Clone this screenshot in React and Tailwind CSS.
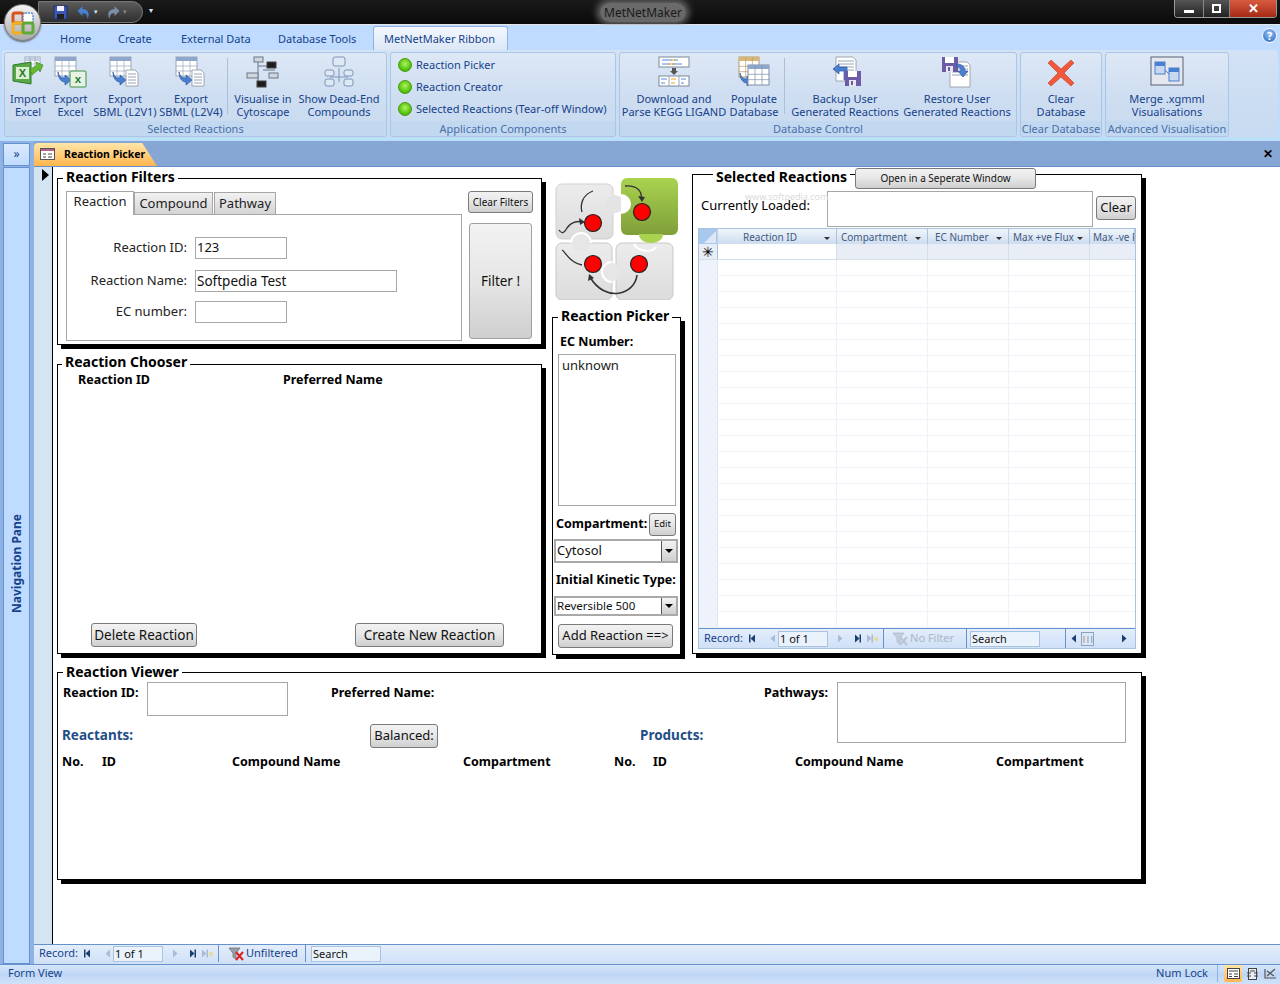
import React from "react";

const rows = Array.from({ length: 23 }, (_, i) => i);
const gridCols = ["w-[119px]", "w-[91px]", "w-[81px]", "w-[81px]", "flex-1"];

function Grid({ x, y, w = 18, h = 16, head = "#8fa6cc", line = "#9aa7bb" }) {
  const cw = w / 3;
  const rh = (h - 4) / 3;
  return (
    <g>
      <rect x={x} y={y} width={w} height={h} fill="#fff" stroke={line} strokeWidth="1" />
      <rect x={x} y={y} width={w} height="4" fill={head} />
      {[1, 2].map((i) => (
        <line key={"v" + i} x1={x + cw * i} x2={x + cw * i} y1={y} y2={y + h} stroke={line} strokeWidth="0.7" />
      ))}
      {[1, 2].map((i) => (
        <line key={"h" + i} x1={x} x2={x + w} y1={y + 4 + rh * i} y2={y + 4 + rh * i} stroke={line} strokeWidth="0.7" />
      ))}
    </g>
  );
}

function BlueArrow({ x, y, flip }) {
  return (
    <g transform={`translate(${x} ${y})${flip ? " scale(-1 1)" : ""}`}>
      <path d="M0 0 C1 5 4 6 7 6 L7 3 L13 8 L7 13 L7 10 C3 10 0 6 0 0Z" fill="#4a7fd0" stroke="#2b56a0" strokeWidth="0.7" />
    </g>
  );
}

function Doc({ x, y, w = 13, h = 16 }) {
  return (
    <g>
      <path d={`M${x} ${y} H${x + w - 3} L${x + w} ${y + 3} V${y + h} H${x}Z`} fill="#fff" stroke="#8d949e" strokeWidth="0.8" />
      {[4, 7, 10, 13].map((d) => (
        <line key={d} x1={x + 2} x2={x + w - 2} y1={y + d} y2={y + d} stroke="#7f8da3" strokeWidth="0.8" />
      ))}
    </g>
  );
}

function Floppy({ x, y, c = "#6e5ba6" }) {
  return (
    <g>
      <rect x={x} y={y} width="16" height="15" fill={c} />
      <rect x={x + 3} y={y} width="9" height="6" fill="#fff" />
      <rect x={x + 4} y={y + 9} width="7" height="6" fill="#e8e8f0" />
      <rect x={x + 6} y={y + 10} width="2" height="4" fill={c} />
    </g>
  );
}

function ExcelBadge({ x, y, w = 16 }) {
  return (
    <g>
      <rect x={x} y={y} width={w} height={w} rx="1" fill="#e6f3e4" stroke="#3f8f46" strokeWidth="1" />
      <text x={x + w / 2} y={y + w - 4} textAnchor="middle" fontSize={w * 0.72} fontWeight="700" fontFamily="Liberation Sans" fill="#1f7a2e">x</text>
    </g>
  );
}

function Icon({ name }) {
  return (
    <svg width="36" height="32" viewBox="0 0 36 32" className="shrink-0">
      {name === "import" && (
        <g>
          <Grid x={15} y={1} w={15} h={13} head="#c4cfe0" />
          <path d="M3 9 L21 6 V28 L3 25Z" fill="#5aa845" stroke="#2d7a2c" />
          <rect x="6" y="11" width="13" height="12" fill="#dcefd3" />
          <text x="12.5" y="21" textAnchor="middle" fontSize="11" fontWeight="700" fontFamily="Liberation Sans" fill="#1f7a2e">X</text>
          <path d="M20 14 L27 9 L26 6 L33 9 L30 16 L29 13 L22 19Z" fill="#66bb33" stroke="#3e8a22" strokeWidth="0.7" />
        </g>
      )}
      {name === "export" && (
        <g>
          <Grid x={2} y={1} w={21} h={19} />
          <BlueArrow x={5} y={16} />
          <ExcelBadge x={17} y={15} />
        </g>
      )}
      {name === "sbml" && (
        <g>
          <Grid x={3} y={1} w={21} h={19} />
          <BlueArrow x={6} y={16} />
          <Doc x={19} y={14} w={12} h={16} />
        </g>
      )}
      {name === "cytoscape" && (
        <g stroke="#6b7686" fill="none">
          <path d="M13 6 V26 M13 10 H26 M13 20 H8 M13 26 H16 M18 14 H30" />
          <rect x="9" y="1" width="9" height="5" fill="#cfd6e0" />
          <rect x="22" y="6" width="9" height="6" fill="#1d1d1d" stroke="#444" />
          <rect x="2" y="17" width="11" height="5" fill="#cfd6e0" />
          <rect x="24" y="17" width="9" height="5" fill="#cfd6e0" />
          <rect x="12" y="25" width="9" height="6" fill="#1d1d1d" stroke="#444" />
        </g>
      )}
      {name === "deadend" && (
        <g stroke="#7c93b8" fill="#dfe9f6">
          <path d="M18 12 V26 M9 21 H27" fill="none" />
          <rect x="12" y="1" width="12" height="9" rx="2" />
          <rect x="4" y="14" width="9" height="6" rx="2" />
          <rect x="23" y="14" width="9" height="6" rx="2" />
          <rect x="4" y="23" width="9" height="7" rx="2" />
          <rect x="23" y="23" width="9" height="7" rx="2" />
        </g>
      )}
      {name === "kegg" && (
        <g>
          <rect x="3" y="1" width="30" height="10" fill="#fff" stroke="#7d8798" />
          <path d="M6 4 H16 M18 4 H22 M6 8 H14 M16 8 H26" stroke="#4d8be0" strokeWidth="1" />
          <path d="M15 4 H19 M12 8 H19" stroke="#f0a020" strokeWidth="1" />
          <path d="M16 12 H20 V15 H22 L18 19 L14 15 H16Z" fill="#555" />
          <rect x="3" y="20" width="30" height="10" fill="#fff" stroke="#7d8798" />
          <path d="M13 20 V30 M23 20 V30" stroke="#9aa7bb" />
          <path d="M5 23 H11 M5 27 H9 M25 23 H30 M25 27 H28" stroke="#4d8be0" />
          <path d="M15 23 H20 M15 27 H19" stroke="#f0a020" />
        </g>
      )}
      {name === "populate" && (
        <g>
          <Grid x={3} y={1} w={20} h={20} head="#d8b878" line="#b89c6c" />
          <BlueArrow x={4} y={17} />
          <Grid x={12} y={9} w={21} h={20} head="#8fa6cc" line="#7d8da8" />
        </g>
      )}
      {name === "backup" && (
        <g>
          <Doc x={9} y={1} w={20} h={24} />
          <path d="M20 11 H12 L12 8 L6 13 L12 18 V15 H17 V24 H20Z" fill="#4a7fd0" stroke="#2b56a0" strokeWidth="0.7" />
          <Floppy x={18} y={15} />
        </g>
      )}
      {name === "restore" && (
        <g>
          <Doc x={11} y={6} w={20} h={25} />
          <Floppy x={3} y={1} />
          <path d="M18 8 C24 8 26 12 26 15 H29 L24 21 L19 15 H22 C22 12 20 11 18 11Z" fill="#4a7fd0" stroke="#2b56a0" strokeWidth="0.7" />
        </g>
      )}
      {name === "clear" && (
        <g>
          <path d="M8 4 L18 13 L28 4 L31 7 L21 17 L31 27 L28 30 L18 21 L8 30 L5 27 L15 17 L5 7Z" fill="#f2583c" stroke="#c53a22" strokeWidth="0.6" />
        </g>
      )}
      {name === "merge" && (
        <g>
          <rect x="2" y="1" width="32" height="28" fill="#e4e8ee" stroke="#586275" />
          <rect x="6" y="6" width="10" height="12" fill="#c8d8f0" stroke="#4a7fd0" />
          <rect x="6" y="6" width="10" height="4" fill="#4a7fd0" />
          <rect x="20" y="12" width="10" height="13" fill="#c8d8f0" stroke="#4a7fd0" />
          <rect x="20" y="12" width="10" height="4" fill="#4a7fd0" />
          <path d="M16 14 L20 18" stroke="#4a7fd0" />
        </g>
      )}
    </svg>
  );
}

function RibbonBtn({ icon, width, lines }) {
  return (
    <div className={`${width} flex flex-col items-center shrink-0 pt-[3px]`}>
      <Icon name={icon} />
      <div className="mt-[4px] text-center text-[11px] leading-[13px] text-[#15428b] whitespace-nowrap">
        {lines.map((l) => (
          <div key={l}>{l}</div>
        ))}
      </div>
    </div>
  );
}

function RibbonGroup({ label, width, children }) {
  return (
    <div className={`${width} shrink-0 h-[85px] flex flex-col rounded-[3px] border border-[#a9c6e8] bg-gradient-to-b from-[#dde8f6] via-[#cfdef1] to-[#c8daf0] overflow-hidden`}>
      <div className="flex-1 flex px-[2px]">{children}</div>
      <div className="h-[15px] bg-[#c1d8f0] text-center text-[11px] leading-[15px] text-[#4a6fa8] whitespace-nowrap">{label}</div>
    </div>
  );
}

function Sep() {
  return <div className="w-px h-[56px] mt-[5px] bg-[#a9bfdb] shrink-0" />;
}

function GreenDot() {
  return <span className="w-[14px] h-[14px] rounded-full shrink-0 border border-[#4b9a12] bg-[radial-gradient(circle_at_50%_40%,#b4f060,#55c80e_60%,#2f8f08)]" />;
}

function OldBtn({ className = "", children }) {
  return (
    <button className={`rounded-[3px] border border-[#7a7a7a] bg-gradient-to-b from-[#f2f2f2] via-[#e6e6e6] to-[#cfcfcf] text-[#111] whitespace-nowrap flex items-center justify-center ${className}`}>
      {children}
    </button>
  );
}

function Panel({ title, titleClass = "", className = "", children }) {
  return (
    <div className={`relative border border-black bg-white shadow-[4px_4px_0_#000] ${className}`}>
      <span className={`absolute bg-white px-[3px] text-[14px] leading-[17px] font-bold text-black whitespace-nowrap ${titleClass}`}>{title}</span>
      {children}
    </div>
  );
}

function Field({ className = "", children }) {
  return <div className={`border border-[#a6a6a6] bg-white text-[#111] px-[1px] flex items-center ${className}`}>{children}</div>;
}

function Combo({ className = "", textClass = "text-[13px]", children }) {
  return (
    <div className={`border-2 border-[#a9a9a9] bg-white flex items-center justify-between ${className}`}>
      <span className={`pl-px pb-px text-[#111] ${textClass}`}>{children}</span>
      <span className="w-[15px] h-full border-l border-[#555] bg-gradient-to-b from-[#f4f4f4] to-[#cfcfcf] flex items-center justify-center">
        <span className="border-x-[4px] border-t-[4px] border-x-transparent border-t-black" />
      </span>
    </div>
  );
}

function Logo() {
  return (
    <svg width="125" height="123" viewBox="0 0 125 123" className="shrink-0">
      <defs>
        <linearGradient id="grn" x1="0" y1="0" x2="0" y2="1">
          <stop offset="0" stopColor="#a9d24f" />
          <stop offset="1" stopColor="#7f9f3a" />
        </linearGradient>
        <linearGradient id="gry" x1="0" y1="0" x2="0" y2="1">
          <stop offset="0" stopColor="#ececec" />
          <stop offset="1" stopColor="#dcdcdc" />
        </linearGradient>
      </defs>
      <rect x="1" y="7" width="57" height="55" rx="6" fill="url(#gry)" stroke="#cfcfcf" />
      <circle cx="60" cy="27" r="9" fill="#e4e4e4" />
      <rect x="1" y="66" width="56" height="57" rx="6" fill="url(#gry)" stroke="#c8c8c8" />
      <rect x="61" y="66" width="57" height="57" rx="6" fill="url(#gry)" stroke="#c8c8c8" />
      <circle cx="26" cy="66" r="9" fill="#e6e6e6" />
      <path d="M16 66 A10 10 0 0 1 36 66" fill="none" stroke="#fff" strokeWidth="2" />
      <circle cx="57" cy="95" r="9" fill="#e6e6e6" />
      <path d="M57 85 A10 10 0 0 0 57 105" fill="none" stroke="#fff" strokeWidth="2" />
      <rect x="66" y="1" width="57" height="57" rx="6" fill="url(#grn)" />
      <path d="M66 17 A10 10 0 0 1 66 37Z" fill="#fff" />
      <path d="M84 57 h24 c0 12 -24 12 -24 0Z" fill="#a9d24f" />
      <path d="M79 67 c4 8 18 9 22 3" fill="none" stroke="#fff" strokeWidth="2" />
      <g fill="none" stroke="#333" strokeWidth="1.3">
        <path d="M38 14 C27 18 25 28 27 35" />
        <path d="M4 53 C7 58 10 55 12 51 C17 44 24 44 27 45" />
        <path d="M70 9 C80 8 88 13 86 22" />
        <path d="M7 73 C10 74 14 86 27 88" />
        <path d="M82 98 C80 118 50 126 35 100" strokeWidth="1.6" />
      </g>
      <g fill="#333">
        <path d="M30 45 L24 41 L25 48Z" />
        <path d="M87 25 L83 19 L90 20Z" />
        <path d="M34 97 L33 104 L39 101Z" />
      </g>
      <g fill="#f00" stroke="#222" strokeWidth="1.2">
        <circle cx="38" cy="46" r="8.5" />
        <circle cx="87" cy="35" r="8.5" />
        <circle cx="38" cy="87" r="8.5" />
        <circle cx="84" cy="87" r="8.5" />
      </g>
    </svg>
  );
}

function NavTri({ dir = "r", on, bar }) {
  const c = on ? "#1c3f73" : "#a9bcd6";
  return (
    <svg width="9" height="9" viewBox="0 0 9 9" className="shrink-0">
      {dir === "r" ? <path d="M2 0.5 L6.5 4.5 L2 8.5Z" fill={c} /> : <path d="M7 0.5 L2.5 4.5 L7 8.5Z" fill={c} />}
      {bar && <rect x={dir === "r" ? 6.5 : 1} y="0.5" width="1.5" height="8" fill={c} />}
    </svg>
  );
}

function RecordCore() {
  return (
    <div className="flex items-center h-full pl-[5px] pr-[5px] border-r border-[#6591cd] shrink-0">
      <span className="text-[11px] text-[#15428b] mr-[5px]">Record:</span>
      <NavTri dir="l" on bar />
      <span className="w-[11px]" />
      <NavTri dir="l" />
      <span className="ml-px w-[50px] h-[16px] border border-[#a9c2e0] bg-[#eaf2fc] text-[11px] leading-[14px] pl-px text-[#111]">1 of 1</span>
      <span className="w-[8px]" />
      <NavTri />
      <span className="w-[8px]" />
      <NavTri on bar />
      <span className="w-[3px]" />
      <NavTri bar />
      <span className="w-[4px] h-[4px] bg-[#e6dca8]" />
    </div>
  );
}

function FilterGlyph({ on }) {
  return (
    <svg width="16" height="14" viewBox="0 0 16 14" className="shrink-0">
      <path d="M1 1 H12 L8 6 V12 L5 10 V6Z" fill={on ? "#9aa0aa" : "#c3cedd"} stroke={on ? "#666" : "#a9b6c8"} strokeWidth="0.7" />
      <path d="M8 5 L15 13 M15 5 L8 13" stroke={on ? "#e0201c" : "#b9c5d6"} strokeWidth="2" />
    </svg>
  );
}

export default function App() {
  return (
    <div className="w-[1280px] h-[984px] overflow-hidden flex flex-col bg-white font-['Noto_Sans',sans-serif]">
      {/* Title bar */}
      <div className="relative h-[25px] shrink-0 bg-gradient-to-b from-[#1a1a1a] to-[#0a0a0a] border-b border-[#e5e5e5] flex items-start">
        <div className="ml-[38px] mt-px h-[22px] w-[105px] rounded-r-full border border-[#777] bg-gradient-to-b from-[#5c5c5c] to-[#2f2f2f] flex items-center pl-[14px] gap-[2px]">
          <svg width="15" height="15" viewBox="0 0 15 15">
            <rect x="1" y="1" width="13" height="13" fill="#3c58b0" stroke="#1c2f70" />
            <rect x="4" y="1" width="7" height="5" fill="#eef" />
            <rect x="4" y="9" width="7" height="5" fill="#222" />
          </svg>
          <svg width="16" height="15" viewBox="0 0 15 15" className="ml-[6px]">
            <path d="M1 6 L6 1 V4 C11 4 14 8 11 14 C11 10 9 8 6 8 V11Z" fill="#4a7fd0" />
          </svg>
          <span className="text-[7px] text-[#cfe0f5]">▾</span>
          <svg width="16" height="15" viewBox="0 0 15 15" className="ml-[5px]">
            <path d="M14 6 L9 1 V4 C4 4 1 8 4 14 C4 10 6 8 9 8 V11Z" fill="#7b8ea8" />
          </svg>
          <span className="text-[7px] text-[#888]">▾</span>
        </div>
        <span className="ml-[6px] mt-[5px] text-[8px] leading-[10px] text-[#d8e4f5]">▾</span>
        <div className="absolute left-[600px] top-[3px] px-[4px] rounded-full bg-[#8f8f8f]/70 shadow-[0_0_7px_3px_rgba(143,143,143,0.7)] text-[12px] leading-[19px] text-[#1a1a1a]">MetNetMaker</div>
        <div className="ml-auto mr-[3px] h-[18px] flex border border-t-0 border-[#999] rounded-b-[4px] overflow-hidden">
          <div className="w-[29px] bg-gradient-to-b from-[#555] to-[#222] border-r border-[#888] flex items-end justify-center pb-[4px]">
            <span className="w-[10px] h-[3px] bg-white" />
          </div>
          <div className="w-[26px] bg-gradient-to-b from-[#555] to-[#222] border-r border-[#888] flex items-center justify-center">
            <span className="w-[9px] h-[9px] border-2 border-white" />
          </div>
          <div className="w-[46px] bg-gradient-to-b from-[#d85b3f] to-[#a52a14] flex items-center justify-center text-white text-[13px] font-bold leading-none">✕</div>
        </div>
      </div>

      {/* Ribbon tabs */}
      <div className="relative h-[25px] shrink-0 bg-[#bfdbff] flex items-end text-[11px] text-[#15428b]">
        <div className="w-[60px]" />
        <div className="w-[58px] leading-[22px]">Home</div>
        <div className="w-[63px] leading-[22px]">Create</div>
        <div className="w-[97px] leading-[22px]">External Data</div>
        <div className="w-[95px] leading-[22px]">Database Tools</div>
        <div className="w-[135px] h-[24px] rounded-t-[3px] border border-b-0 border-[#8db2e3] bg-gradient-to-b from-[#f4f8fe] to-[#dbe7f6] pl-[10px] leading-[24px]">MetNetMaker Ribbon</div>
        <span className="absolute right-[3px] top-[3px] w-[15px] h-[15px] rounded-full bg-[radial-gradient(circle_at_50%_35%,#9cc6f5,#1f5fbf)] border border-white text-white text-[11px] font-bold leading-[13px] text-center">?</span>
        {/* Office orb */}
        <div className="absolute left-[4px] top-[-21px] w-[37px] h-[37px] rounded-full bg-gradient-to-b from-[#f4f4f4] to-[#a9a9a9] border border-[#777] flex items-center justify-center shadow-[0_1px_2px_#555]">
          <svg width="24" height="24" viewBox="0 0 24 24">
            <rect x="2" y="2" width="10" height="10" rx="2" fill="none" stroke="#d9531e" strokeWidth="3" />
            <rect x="12" y="2" width="10" height="10" rx="2" fill="#fff" stroke="#5a86c9" strokeWidth="1.5" strokeDasharray="2 1" />
            <rect x="2" y="12" width="10" height="10" rx="2" fill="none" stroke="#f0b021" strokeWidth="3" />
            <rect x="12" y="12" width="10" height="10" rx="2" fill="none" stroke="#5fa83a" strokeWidth="3" />
          </svg>
        </div>
      </div>

      {/* Ribbon */}
      <div className="h-[91px] shrink-0 bg-[#bfdbff] px-[2px]">
        <div className="h-[90px] rounded-[3px] border-b-2 border-b-[#b5e4f8] bg-gradient-to-b from-[#d3e2f4] to-[#c6daf1] flex gap-[3px] pl-[2px] pt-[2px]">
          <RibbonGroup label="Selected Reactions" width="w-[383px]">
            <RibbonBtn icon="import" width="w-[42px]" lines={["Import", "Excel"]} />
            <RibbonBtn icon="export" width="w-[43px]" lines={["Export", "Excel"]} />
            <RibbonBtn icon="sbml" width="w-[66px]" lines={["Export", "SBML (L2V1)"]} />
            <RibbonBtn icon="sbml" width="w-[66px]" lines={["Export", "SBML (L2V4)"]} />
            <div className="w-[6px] shrink-0 flex justify-center"><Sep /></div>
            <RibbonBtn icon="cytoscape" width="w-[66px]" lines={["Visualise in", "Cytoscape"]} />
            <RibbonBtn icon="deadend" width="w-[86px]" lines={["Show Dead-End", "Compounds"]} />
          </RibbonGroup>
          <RibbonGroup label="Application Components" width="w-[226px]">
            <div className="flex flex-col pl-[5px] pt-[5px] gap-[8px] text-[11px] leading-[14px] text-[#15428b] whitespace-nowrap">
              {["Reaction Picker", "Reaction Creator", "Selected Reactions (Tear-off Window)"].map((t) => (
                <div key={t} className="flex items-center gap-[4px]">
                  <GreenDot />
                  {t}
                </div>
              ))}
            </div>
          </RibbonGroup>
          <RibbonGroup label="Database Control" width="w-[398px]">
            <RibbonBtn icon="kegg" width="w-[104px]" lines={["Download and", "Parse KEGG LIGAND"]} />
            <RibbonBtn icon="populate" width="w-[52px] ml-[2px]" lines={["Populate", "Database"]} />
            <div className="w-[9px] shrink-0 flex justify-center"><Sep /></div>
            <RibbonBtn icon="backup" width="w-[112px]" lines={["Backup User", "Generated Reactions"]} />
            <RibbonBtn icon="restore" width="w-[112px]" lines={["Restore User", "Generated Reactions"]} />
          </RibbonGroup>
          <RibbonGroup label="Clear Database" width="w-[82px]">
            <div className="flex-1 flex justify-center">
              <RibbonBtn icon="clear" width="w-[70px]" lines={["Clear", "Database"]} />
            </div>
          </RibbonGroup>
          <RibbonGroup label="Advanced Visualisation" width="w-[124px]">
            <div className="flex-1 flex justify-center">
              <RibbonBtn icon="merge" width="w-[100px]" lines={["Merge .xgmml", "Visualisations"]} />
            </div>
          </RibbonGroup>
        </div>
      </div>

      {/* Main */}
      <div className="flex-1 min-h-0 flex bg-[#8db2e3]">
        {/* Navigation pane */}
        <div className="w-[34px] shrink-0 pl-[3px] pr-[4px] pt-[2px] flex flex-col gap-px">
          <div className="h-[23px] border border-[#6591cd] bg-gradient-to-b from-[#dbeafd] to-[#bfdbff] text-center text-[12px] leading-[20px] text-[#15428b]">»</div>
          <div className="flex-1 border border-[#6591cd] bg-[#bfdbff] flex items-center justify-center">
            <span className="[writing-mode:vertical-rl] rotate-180 text-[12px] font-bold text-[#15428b] mt-[-4px]">Navigation Pane</span>
          </div>
        </div>

        <div className="flex-1 min-w-0 flex flex-col">
          {/* Document tab strip */}
          <div className="h-[26px] shrink-0 bg-[#86a6d4] flex items-end justify-between border-b border-[#6591cd]">
            <div className="w-[123px] h-[23px] rounded-tl-[4px] bg-gradient-to-b from-[#ffe6a8] to-[#ffb54a] flex items-center pl-[6px] pb-px gap-[9px] [clip-path:polygon(0_0,88%_0,100%_100%,0_100%)]">
              <svg width="15" height="12" viewBox="0 0 15 12" className="shrink-0">
                <rect x="0.5" y="0.5" width="14" height="11" fill="#fff" stroke="#555" />
                <rect x="1" y="1" width="13" height="2" fill="#b0628c" />
                <path d="M3 6 H6 M3 9 H6 M8 6 H12 M8 9 H12" stroke="#444" />
              </svg>
              <span className="text-[10.5px] font-bold text-black leading-none whitespace-nowrap">Reaction Picker</span>
            </div>
            <span className="mr-[7px] mb-[5px] text-[12px] leading-[14px] font-bold text-black">✕</span>
          </div>

          {/* Form */}
          <div className="flex-1 min-h-0 flex bg-white">
            <div className="w-[19px] shrink-0 bg-[#d5e4f2] border-r border-black pt-[2px] pl-[8px]">
              <span className="block w-0 h-0 border-y-[6px] border-l-[7px] border-y-transparent border-l-black" />
            </div>
            <div className="flex-1 min-w-0 relative pl-[4px] pt-[7px]">
              <div className="flex items-start">
                {/* Left column */}
                <div className="w-[485px] shrink-0 pt-[4px] flex flex-col gap-[19px]">
                  <Panel title="Reaction Filters" titleClass="left-[5px] top-[-11px]" className="h-[167px] pl-[8px] pt-[11px] flex">
                    <div className="w-[396px] shrink-0 flex flex-col">
                      <div className="flex items-end h-[24px] text-[13px] text-[#222]">
                        <div className="w-[68px] h-[24px] bg-white border border-b-0 border-[#a6a6a6] text-center leading-[18px] relative z-10 mb-[-1px]">Reaction</div>
                        <div className="w-[79px] h-[22px] border border-b-0 border-[#a6a6a6] bg-gradient-to-b from-[#f2f2f2] to-[#d4d4d4] text-center leading-[20px]">Compound</div>
                        <div className="w-[62px] ml-px h-[22px] border border-b-0 border-[#a6a6a6] bg-gradient-to-b from-[#f2f2f2] to-[#d4d4d4] text-center leading-[20px]">Pathway</div>
                      </div>
                      <div className="h-[127px] border border-[#a6a6a6] pt-[22px] flex flex-col text-[13px] text-[#222]">
                        <div className="flex items-center h-[22px]">
                          <span className="w-[120px] text-right">Reaction ID:</span>
                          <Field className="ml-[8px] w-[92px] h-[22px] text-[13px]">123</Field>
                        </div>
                        <div className="flex items-center h-[22px] mt-[11px]">
                          <span className="w-[120px] text-right">Reaction Name:</span>
                          <Field className="ml-[8px] w-[202px] h-[22px] text-[13.5px]">Softpedia Test</Field>
                        </div>
                        <div className="flex items-center h-[22px] mt-[9px]">
                          <span className="w-[120px] text-right">EC number:</span>
                          <Field className="ml-[8px] w-[92px] h-[22px]" />
                        </div>
                      </div>
                    </div>
                    <div className="ml-[6px] flex flex-col">
                      <OldBtn className="w-[65px] h-[22px] mt-px text-[10px]">Clear Filters</OldBtn>
                      <OldBtn className="w-[63px] h-[116px] mt-[10px] ml-px text-[13.5px] !border-[#a0a0a0]">Filter !</OldBtn>
                    </div>
                  </Panel>
                  <Panel title="Reaction Chooser" titleClass="left-[4px] top-[-12px]" className="h-[290px] flex flex-col">
                    <div className="flex text-[12.5px] font-bold text-black mt-[6px] leading-[18px]">
                      <span className="ml-[20px] w-[205px]">Reaction ID</span>
                      <span>Preferred Name</span>
                    </div>
                    <div className="mt-auto mb-[6px] flex text-[13.5px]">
                      <OldBtn className="ml-[33px] w-[106px] h-[24px]">Delete Reaction</OldBtn>
                      <OldBtn className="ml-[158px] w-[149px] h-[24px]">Create New Reaction</OldBtn>
                    </div>
                  </Panel>
                </div>

                {/* Middle column */}
                <div className="ml-[10px] w-[129px] shrink-0 pt-[3px] flex flex-col">
                  <div className="pl-[3px]"><Logo /></div>
                  <Panel title="Reaction Picker" titleClass="left-[5px] top-[-11px]" className="mt-[17px] h-[338px] pl-[5px] pr-[4px] pt-[15px] flex flex-col">
                    <div className="text-[12.5px] font-bold text-black leading-[17px] pl-[2px]">EC Number:</div>
                    <div className="mt-[4px] h-[152px] border border-[#a6a6a6] px-[3px] text-[13px] leading-[20px] text-[#222]">unknown</div>
                    <div className="mt-[7px] h-[23px] flex items-center justify-between text-[12.5px] font-bold text-black -ml-[2px]">
                      <span>Compartment:</span>
                      <OldBtn className="w-[27px] h-[23px] text-[9.5px] font-normal">Edit</OldBtn>
                    </div>
                    <Combo className="mt-[3px] h-[24px] -ml-[4px] -mr-[2px]">Cytosol</Combo>
                    <div className="mt-[7px] text-[12.5px] font-bold text-black leading-[20px] -ml-[2px] whitespace-nowrap">Initial Kinetic Type:</div>
                    <Combo className="mt-[6px] h-[20px] -ml-[4px] -mr-[2px]" textClass="text-[11.5px]">Reversible 500</Combo>
                    <OldBtn className="mt-[8px] h-[24px] w-[115px] text-[13px]">Add Reaction ==&gt;</OldBtn>
                  </Panel>
                </div>

                {/* Selected reactions */}
                <Panel title="Selected Reactions" titleClass="left-[20px] top-[-7px]" className="ml-[11px] w-[450px] h-[480px] px-[5px] flex flex-col">
                  <OldBtn className="absolute left-[162px] top-[-7px] w-[181px] h-[21px] text-[10px]">Open in a Seperate Window</OldBtn>
                  <div className="h-[37px] mt-[16px] flex items-start text-[13px] text-black">
                    <span className="ml-[3px] w-[126px] mt-[4px] leading-[20px]">Currently Loaded:</span>
                    <div className="w-[266px] h-[36px] border border-[#a6a6a6]" />
                    <OldBtn className="ml-[3px] mt-[5px] w-[40px] h-[24px] text-[13px]">Clear</OldBtn>
                  </div>
                  <span className="absolute left-[52px] top-[16px] text-[9px] leading-[12px] text-[#dcdcdc]">www.softpedia.com</span>

                  <div className="h-[421px] border border-[#a9c2e0] flex flex-col">
                    <div className="h-[15px] shrink-0 flex bg-gradient-to-b from-[#f0f5fb] to-[#cddcef]">
                      <div className="w-[19px] shrink-0 bg-[#a9c8ee] border-r border-[#c3d3e6] relative">
                        <span className="absolute right-px bottom-px w-0 h-0 border-l-[12px] border-b-[12px] border-l-transparent border-b-[#dce8f6]" />
                      </div>
                      {[
                        ["Reaction ID", "pl-[25px]"],
                        ["Compartment", "pl-[4px]"],
                        ["EC Number", "pl-[7px]"],
                        ["Max +ve Flux", "pl-[4px]"],
                        ["Max -ve Flux", "pl-[3px]"],
                      ].map(([t, pad], i) => (
                        <div key={t} className={`${gridCols[i]} ${i < 4 ? "shrink-0" : "min-w-0"} relative flex items-center overflow-hidden border-r border-[#a9c2e0] text-[10px] leading-none text-[#3f5a80] whitespace-nowrap ${pad}`}>
                          {t}
                          {i < 4 && <span className="absolute right-[6px] top-[8px] w-0 h-0 border-x-[3px] border-t-[3px] border-x-transparent border-t-[#333]" />}
                        </div>
                      ))}
                    </div>
                    <div className="h-[16px] shrink-0 flex bg-[#e8edf6] border-b border-[#d5deeb]">
                      <div className="w-[19px] shrink-0 border-r border-[#a9c2e0] text-center text-[14px] leading-[16px] text-black">✳</div>
                      <div className="w-[119px] shrink-0 bg-white border-r border-[#d5deeb]" />
                      <div className="w-[91px] shrink-0 border-r border-[#d5deeb]" />
                      <div className="w-[81px] shrink-0 border-r border-[#d5deeb]" />
                      <div className="w-[81px] shrink-0 border-r border-[#d5deeb]" />
                      <div className="flex-1" />
                    </div>
                    <div className="flex-1 min-h-0 overflow-hidden">
                      {rows.map((r) => (
                        <div key={r} className="h-[16px] flex border-b border-[#eef2f8]">
                          <div className="w-[19px] shrink-0 bg-[#eef2fb] border-r border-[#dfe6f1]" />
                          {gridCols.map((c, i) => (
                            <div key={i} className={`${c} ${i < 4 ? "shrink-0 border-r border-[#eef2f8]" : ""}`} />
                          ))}
                        </div>
                      ))}
                    </div>
                    <div className="h-[20px] shrink-0 flex items-center border-t border-[#6591cd] bg-gradient-to-b from-[#e4eefb] to-[#cfe0f7]">
                      <RecordCore />
                      <div className="flex items-center gap-[2px] h-full w-[83px] pl-[8px] border-r border-[#6591cd] text-[11px] text-[#a9b6c8] whitespace-nowrap">
                        <FilterGlyph />
                        No Filter
                      </div>
                      <div className="flex items-center h-full w-[99px] pl-[3px] border-r border-[#6591cd]">
                        <span className="w-[70px] h-[16px] border border-[#a9c2e0] bg-[#eaf2fc] text-[11px] leading-[14px] pl-px text-[#111]">Search</span>
                      </div>
                      <div className="flex-1 flex items-center pl-[3px] pr-[6px]">
                        <NavTri dir="l" on />
                        <span className="ml-[3px] w-[13px] h-[14px] border border-[#8aa2c4] bg-[#dce8f6] text-[7px] leading-[12px] text-center text-[#555]">|||</span>
                        <span className="ml-auto"><NavTri on /></span>
                      </div>
                    </div>
                  </div>
                </Panel>
              </div>

              {/* Reaction viewer */}
              <Panel title="Reaction Viewer" titleClass="left-[5px] top-[-10px]" className="mt-[17px] w-[1085px] h-[208px] flex flex-col pt-[9px] text-[12.5px] text-black">
                <div className="flex items-start h-[62px]">
                  <span className="ml-[5px] w-[84px] mt-[2px] font-bold leading-[18px]">Reaction ID:</span>
                  <div className="w-[141px] h-[34px] border border-[#a6a6a6]" />
                  <span className="ml-[43px] w-[433px] mt-[2px] font-bold leading-[18px]">Preferred Name:</span>
                  <span className="w-[73px] mt-[2px] font-bold leading-[18px]">Pathways:</span>
                  <div className="w-[289px] h-[61px] border border-[#a6a6a6]" />
                </div>
                <div className="flex items-center h-[24px] mt-[-20px]">
                  <span className="ml-[4px] w-[308px] pb-[2px] text-[13.5px] font-bold text-[#1f4e87]">Reactants:</span>
                  <OldBtn className="w-[68px] h-[24px] text-[13px]">Balanced:</OldBtn>
                  <span className="ml-[202px] pb-[2px] text-[13.5px] font-bold text-[#1f4e87]">Products:</span>
                </div>
                <div className="flex mt-[4px] font-bold leading-[20px] whitespace-nowrap">
                  <span className="ml-[4px] w-[40px]">No.</span>
                  <span className="w-[130px]">ID</span>
                  <span className="w-[231px]">Compound Name</span>
                  <span className="w-[151px]">Compartment</span>
                  <span className="w-[39px]">No.</span>
                  <span className="w-[142px]">ID</span>
                  <span className="w-[201px]">Compound Name</span>
                  <span>Compartment</span>
                </div>
              </Panel>
            </div>
          </div>

          {/* Record navigation */}
          <div className="h-[20px] shrink-0 flex items-center pb-[2px] border-t border-[#6591cd] bg-gradient-to-b from-[#e4eefb] to-[#cfe0f7]">
            <RecordCore />
            <div className="flex items-center gap-[2px] h-full w-[87px] pl-[9px] border-r border-[#6591cd] text-[11px] text-[#15428b]">
              <FilterGlyph on />
              Unfiltered
            </div>
            <div className="pl-[5px]">
              <div className="w-[70px] h-[16px] border border-[#a9c2e0] bg-[#eaf2fc] text-[11px] leading-[14px] pl-px text-[#111]">Search</div>
            </div>
          </div>
        </div>
      </div>

      {/* Status bar */}
      <div className="h-[20px] shrink-0 pb-[2px] border-t border-[#6591cd] bg-gradient-to-b from-[#d6e6fa] via-[#bfd7f5] to-[#cfe2fa] flex items-center text-[11px] text-[#15428b]">
        <span className="ml-[8px]">Form View</span>
        <span className="ml-auto mr-[9px]">Num Lock</span>
        <div className="h-full border-l border-[#8db2e3] pl-[6px] flex items-center gap-[2px] pr-[2px]">
          <span className="w-[18px] h-[17px] rounded-[2px] bg-gradient-to-b from-[#ffe6a8] to-[#ffb54a] flex items-center justify-center">
            <svg width="13" height="11" viewBox="0 0 13 11">
              <rect x="0.5" y="0.5" width="12" height="10" fill="#fff" stroke="#444" />
              <path d="M2 3 H11 M2 6 H5 M7 6 H11 M2 8.5 H5 M7 8.5 H11" stroke="#444" />
            </svg>
          </span>
          <span className="w-[16px] h-[17px] flex items-center justify-center">
            <svg width="11" height="12" viewBox="0 0 11 12">
              <rect x="1.5" y="0.5" width="8" height="11" fill="#e8eef6" stroke="#444" />
              <path d="M3 3 H8 M0 5 H4 M7 5 H11 M0 8 H4 M7 8 H11" stroke="#444" />
            </svg>
          </span>
          <span className="w-[16px] h-[17px] flex items-center justify-center">
            <svg width="13" height="11" viewBox="0 0 13 11">
              <path d="M1 1 V10 H12 M3 8 L11 1 M3 3 L10 8" stroke="#555" strokeWidth="1.2" fill="none" />
            </svg>
          </span>
        </div>
      </div>
    </div>
  );
}
